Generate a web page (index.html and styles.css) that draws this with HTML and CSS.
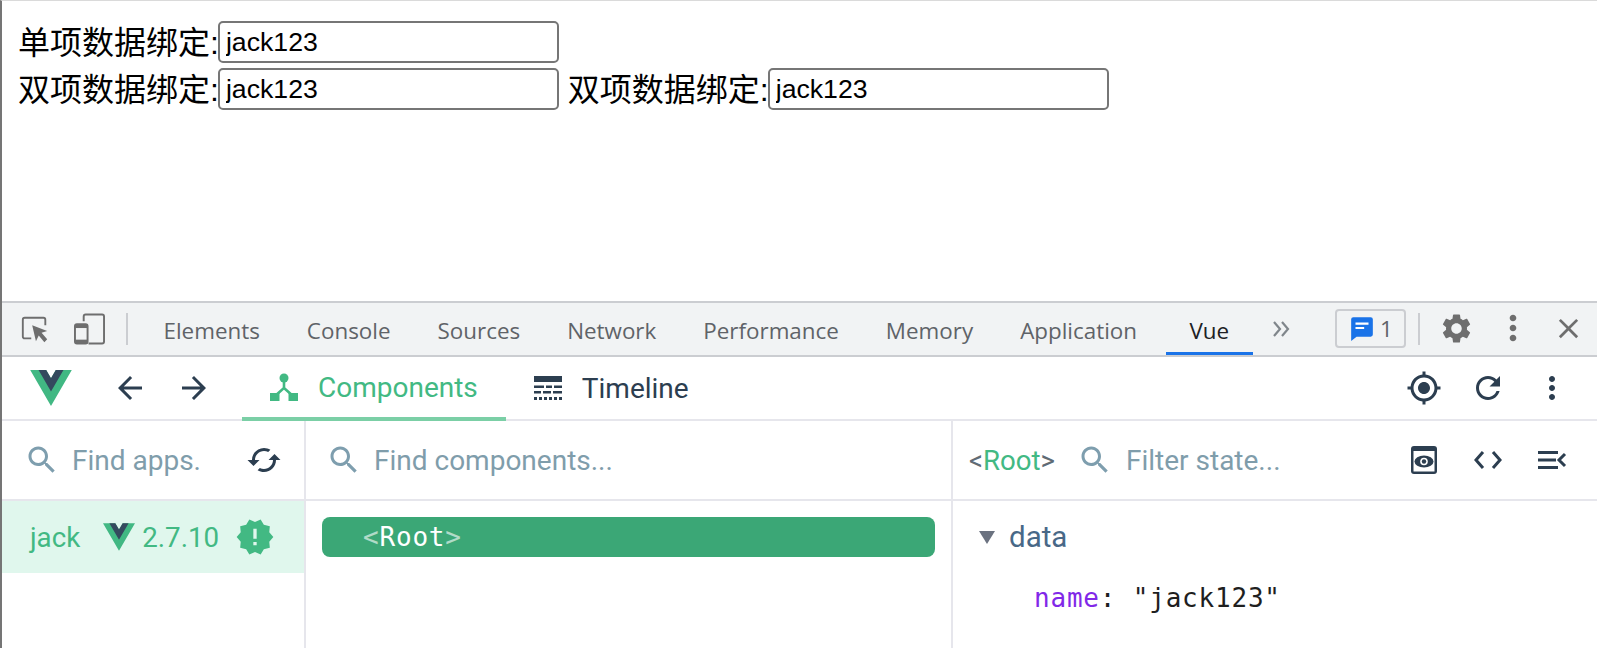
FILE: index.html
```html
<!DOCTYPE html>
<html lang="en">
<head>
    <meta charset="UTF-8">
    <title>Vue devtools</title>
    <link rel="stylesheet" href="styles.css">
</head>
<body>

<div class="window">
    <div class="page">
        <div class="row">单项数据绑定:<input class="field" type="text" value="jack123"></div>
        <div class="row">双项数据绑定:<input class="field" type="text" value="jack123"> 双项数据绑定:<input class="field" type="text" value="jack123"></div>
    </div>

    <div class="tabbar">
        <div class="tool-icons">
            <svg class="inspect" viewBox="0 0 32 32"><path d="M12 26H5a2 2 0 0 1-2-2V6a2 2 0 0 1 2-2h20a2 2 0 0 1 2 2v6" fill="none" stroke="#6e6e6e" stroke-width="2"/><path d="M13 12l16 6-6 2 6 7-3 3-6-7-3 6z" fill="#6e6e6e"/></svg>
            <svg class="device" viewBox="0 0 32 32"><path d="M10 8V3a2 2 0 0 1 2-2h17a2 2 0 0 1 2 2v26a2 2 0 0 1-2 2H15" fill="none" stroke="#6e6e6e" stroke-width="2"/><rect x="1" y="11" width="13" height="20" rx="2" fill="none" stroke="#6e6e6e" stroke-width="2"/><rect x="1" y="11" width="13" height="4" fill="#6e6e6e"/><rect x="1" y="27" width="13" height="4" fill="#6e6e6e"/></svg>
        </div>
        <span class="sep"></span>
        <div class="tabs">
            <span class="tab">Elements</span>
            <span class="tab">Console</span>
            <span class="tab">Sources</span>
            <span class="tab">Network</span>
            <span class="tab">Performance</span>
            <span class="tab">Memory</span>
            <span class="tab">Application</span>
            <span class="tab active">Vue</span>
        </div>
        <svg class="more-tabs" viewBox="0 0 18 16"><path d="M2 1l6 7-6 7M10 1l6 7-6 7" fill="none" stroke="#80868b" stroke-width="2.200"/></svg>
        <div class="tabbar-right">
            <span class="issues">
                <svg viewBox="0 0 24 24"><path d="M4 2h16a2 2 0 0 1 2 2v14a2 2 0 0 1-2 2H7l-5 4V4a2 2 0 0 1 2-2z" fill="#1a73e8"/><path d="M6 7h12v2H6zM6 11h8v2H6z" fill="#fff"/></svg>
                1
            </span>
            <span class="sep"></span>
            <svg class="gear" viewBox="0 0 24 24"><path d="M19.14 12.94c.04-.3.06-.61.06-.94 0-.32-.02-.64-.07-.94l2.03-1.58c.18-.14.23-.41.12-.61l-1.92-3.32c-.12-.22-.37-.29-.59-.22l-2.39.96c-.5-.38-1.03-.7-1.62-.94l-.36-2.54c-.04-.24-.24-.41-.48-.41h-3.84c-.24 0-.43.17-.47.41l-.36 2.54c-.59.24-1.13.57-1.62.94l-2.39-.96c-.22-.08-.47 0-.59.22L2.74 8.87c-.12.21-.08.47.12.61l2.03 1.58c-.05.3-.09.63-.09.94s.02.64.07.94l-2.03 1.58c-.18.14-.23.41-.12.61l1.92 3.32c.12.22.37.29.59.22l2.39-.96c.5.38 1.03.7 1.62.94l.36 2.54c.05.24.24.41.48.41h3.84c.24 0 .44-.17.47-.41l.36-2.54c.59-.24 1.13-.56 1.62-.94l2.39.96c.22.08.47 0 .59-.22l1.92-3.32c.12-.22.07-.47-.12-.61l-2.01-1.58zM12 15.6c-1.98 0-3.6-1.62-3.6-3.6s1.62-3.6 3.6-3.6 3.6 1.62 3.6 3.6-1.62 3.6-3.6 3.6z"/></svg>
            <svg class="dots" viewBox="0 0 24 24"><path d="M12 8c1.1 0 2-.9 2-2s-.9-2-2-2-2 .9-2 2 .9 2 2 2zm0 2c-1.1 0-2 .9-2 2s.9 2 2 2 2-.9 2-2-.9-2-2-2zm0 6c-1.1 0-2 .9-2 2s.9 2 2 2 2-.9 2-2-.9-2-2-2z"/></svg>
            <svg class="close" viewBox="0 0 24 24"><path d="M19 6.41L17.59 5 12 10.59 6.41 5 5 6.41 10.59 12 5 17.59 6.41 19 12 13.41 17.59 19 19 17.59 13.41 12z"/></svg>
        </div>
    </div>

    <div class="vuebar">
        <svg class="logo" viewBox="0 0 261.76 226.69"><path d="M161.096.001l-30.225 52.351L100.647.001H-.005l130.877 226.688L261.749.001z" fill="#41b883"/><path d="M161.096.001l-30.225 52.351L100.647.001H52.346l78.526 136.01L209.398.001z" fill="#34495e"/></svg>
        <svg class="ico nav-back" viewBox="0 0 24 24"><path d="M20 11H7.83l5.59-5.59L12 4l-8 8 8 8 1.41-1.41L7.83 13H20v-2z"/></svg>
        <svg class="ico nav-fwd" viewBox="0 0 24 24"><path d="M12 4l-1.41 1.41L16.17 11H4v2h12.17l-5.58 5.59L12 20l8-8z"/></svg>
        <div class="vue-tab on">
            <svg viewBox="0 0 28 28"><circle cx="14" cy="5" r="4.500"/><path d="M14 8v7L5 23M14 15l9 8" fill="none" stroke="#42b983" stroke-width="2.600"/><rect x="0" y="20" width="9.500" height="8"/><rect x="18.500" y="20" width="9.500" height="8"/></svg>
            Components
        </div>
        <div class="vue-tab">
            <svg viewBox="0 0 28 24"><path d="M0 0h28v6H0zM0 9.500h10V12H0zM12 9.500h6V12h-6zM20 9.500h8V12h-8zM0 15h7v2.500H0zM9 15h8v2.500H9zM19 15h9v2.500h-9zM0 21h3v3H0zM5 21h3v3H5zM10 21h3v3h-3zM15 21h3v3h-3zM20 21h3v3h-3zM25 21h3v3h-3z"/></svg>
            Timeline
        </div>
        <div class="vue-actions">
            <svg class="ico" viewBox="0 0 24 24"><path d="M12 8c-2.210 0-4 1.790-4 4s1.790 4 4 4 4-1.790 4-4-1.790-4-4-4zm8.940 3c-.46-4.170-3.770-7.480-7.940-7.940V1h-2v2.060C6.830 3.520 3.520 6.830 3.060 11H1v2h2.060c.46 4.170 3.770 7.480 7.940 7.940V23h2v-2.060c4.170-.46 7.480-3.770 7.940-7.940H23v-2h-2.060zM12 19c-3.870 0-7-3.130-7-7s3.130-7 7-7 7 3.130 7 7-3.130 7-7 7z"/></svg>
            <svg class="ico" viewBox="0 0 24 24"><path d="M17.65 6.35C16.2 4.9 14.21 4 12 4c-4.42 0-7.99 3.58-7.99 8s3.570 8 7.990 8c3.730 0 6.840-2.550 7.730-6h-2.080c-.82 2.330-3.040 4-5.650 4-3.310 0-6-2.690-6-6s2.690-6 6-6c1.660 0 3.140.69 4.220 1.780L13 11h7V4l-2.350 2.350z"/></svg>
            <svg class="ico" viewBox="0 0 24 24"><path d="M12 8c1.1 0 2-.9 2-2s-.9-2-2-2-2 .9-2 2 .9 2 2 2zm0 2c-1.1 0-2 .9-2 2s.9 2 2 2 2-.9 2-2-.9-2-2-2zm0 6c-1.1 0-2 .9-2 2s.9 2 2 2 2-.9 2-2-.9-2-2-2z"/></svg>
        </div>
    </div>

    <div class="panes">
        <div class="pane apps">
            <div class="pane-head">
                <svg class="search" viewBox="0 0 24 24"><path d="M15.500 14h-.79l-.28-.27C15.410 12.590 16 11.110 16 9.500 16 5.910 13.090 3 9.500 3S3 5.910 3 9.500 5.910 16 9.500 16c1.610 0 3.090-.59 4.230-1.570l.27.28v.79l5 4.990L20.490 19l-4.990-5zm-6 0C7.010 14 5 11.990 5 9.500S7.010 5 9.500 5 14 7.010 14 9.500 11.990 14 9.500 14z"/></svg>
                <span class="placeholder">Find apps.</span>
                <svg class="sync" viewBox="0 0 24 24"><path d="M19 8l-4 4h3c0 3.310-2.690 6-6 6-1.010 0-1.970-.25-2.800-.7l-1.460 1.460C8.970 19.540 10.430 20 12 20c4.420 0 8-3.580 8-8h3l-4-4zM6 12c0-3.310 2.690-6 6-6 1.010 0 1.970.25 2.800.7l1.460-1.460C15.030 4.460 13.570 4 12 4c-4.420 0-8 3.580-8 8H1l4 4 4-4H6z"/></svg>
            </div>
            <div class="app-row">
                <span class="app-name">jack</span>
                <svg class="app-logo" viewBox="0 0 261.76 226.69"><path d="M161.096.001l-30.225 52.351L100.647.001H-.005l130.877 226.688L261.749.001z" fill="#41b883"/><path d="M161.096.001l-30.225 52.351L100.647.001H52.346l78.526 136.01L209.398.001z" fill="#34495e"/></svg>
                <span class="app-ver">2.7.10</span>
                <svg class="app-badge" viewBox="0 0 24 24"><path d="M23 12l-2.440-2.780.34-3.680-3.610-.82-1.890-3.180L12 3 8.600 1.540 6.710 4.720l-3.610.81.34 3.680L1 12l2.440 2.780-.34 3.690 3.610.82 1.890 3.180L12 21l3.400 1.460 1.890-3.180 3.610-.82-.34-3.680L23 12zm-10 5h-2v-2h2v2zm0-4h-2V7h2v6z"/></svg>
            </div>
        </div>

        <div class="pane tree">
            <div class="pane-head">
                <svg class="search" viewBox="0 0 24 24"><path d="M15.500 14h-.79l-.28-.27C15.410 12.590 16 11.110 16 9.500 16 5.910 13.090 3 9.500 3S3 5.910 3 9.500 5.910 16 9.500 16c1.610 0 3.090-.59 4.230-1.570l.27.28v.79l5 4.990L20.490 19l-4.990-5zm-6 0C7.010 14 5 11.990 5 9.500S7.010 5 9.500 5 14 7.010 14 9.500 11.990 14 9.500 14z"/></svg>
                <span class="placeholder">Find components...</span>
            </div>
            <div class="tree-body">
                <div class="tree-node"><span class="angle">&lt;</span>Root<span class="angle">&gt;</span></div>
            </div>
        </div>

        <div class="pane state">
            <div class="pane-head">
                <span class="root-tag"><span class="tag-angle">&lt;</span>Root<span class="tag-angle">&gt;</span></span>
                <svg class="search" viewBox="0 0 24 24"><path d="M15.500 14h-.79l-.28-.27C15.410 12.590 16 11.110 16 9.500 16 5.910 13.090 3 9.500 3S3 5.910 3 9.500 5.910 16 9.500 16c1.610 0 3.090-.59 4.230-1.570l.27.28v.79l5 4.990L20.490 19l-4.990-5zm-6 0C7.010 14 5 11.990 5 9.500S7.010 5 9.500 5 14 7.010 14 9.500 11.990 14 9.500 14z"/></svg>
                <span class="placeholder">Filter state...</span>
                <div class="state-actions">
                    <svg viewBox="0 0 32 32"><rect x="3" y="2" width="26" height="28" rx="3"/><rect x="5.500" y="7" width="21" height="20.500" fill="#fff"/><ellipse cx="16" cy="17.500" rx="9.500" ry="6"/><circle cx="16" cy="17.500" r="3.800" fill="#fff"/><circle cx="16" cy="17.500" r="2.200"/></svg>
                    <svg viewBox="0 0 32 32"><path d="M11 8l-7 8 7 8M21 8l7 8-7 8" fill="none" stroke="#2c3e50" stroke-width="3"/></svg>
                    <svg viewBox="0 0 32 32"><path d="M2 7h20v3H2zM2 14.500h18v3H2zM2 22h20v3H2z"/><path d="M29 10l-6 6 6 6" fill="none" stroke="#2c3e50" stroke-width="3"/></svg>
                </div>
            </div>
            <div class="state-body">
                <div class="section"><span class="caret"></span>data</div>
                <div class="prop"><span class="key">name</span>: "jack123"</div>
            </div>
        </div>
    </div>
</div>

</body>
</html>
```

FILE: styles.css
```css
html, body {
    margin: 0;
    height: 100%;
    overflow: hidden;
    background: white;
}
.window {
    height: 648px;
    box-sizing: border-box;
    border-top: 1px solid #dadada;
    border-left: 2px solid #757575;
    display: flex;
    flex-direction: column;
    font-family: Roboto, sans-serif;
}

/* page above the devtools, zoomed 200% */
.page {
    height: 281px;
    padding: 19px 16px 0;
    font-family: "Liberation Sans", "Noto Sans CJK SC", sans-serif;
    font-size: 32px;
    color: black;
    line-height: 47px;
}
.row {
    height: 47px;
    white-space: pre-wrap;
}
.field {
    box-sizing: border-box;
    width: 341px;
    height: 42px;
    border: 2px solid #767676;
    border-radius: 5px;
    padding: 2px 6px;
    margin: 1px 0 0 -1px;
    font-family: "Liberation Sans", sans-serif;
    font-size: 26.67px;
    color: black;
    background: white;
    vertical-align: top;
}

/* chrome tab strip */
.tabbar {
    height: 56px;
    flex: none;
    box-sizing: border-box;
    background: #f1f3f4;
    border-top: 2px solid #cbcdd1;
    border-bottom: 2px solid #cbcdd1;
    display: flex;
    align-items: center;
    font-family: "Open Sans", sans-serif;
    font-size: 22.4px;
    color: #5f6368;
}
.tool-icons {
    display: flex;
    align-items: center;
    gap: 24px;
    padding-left: 18px;
    width: 124px;
    box-sizing: border-box;
}
.inspect {
    width: 30px;
    height: 30px;
}
.device {
    width: 31px;
    height: 32px;
}
.sep {
    width: 2px;
    height: 32px;
    background: #cbcdd1;
    flex: none;
}
.tabs {
    display: flex;
    height: 100%;
    padding-left: 12px;
}
.tab {
    padding: 3px 23.5px 0;
    display: flex;
    align-items: center;
    white-space: nowrap;
    box-sizing: border-box;
}
.tab.active {
    color: #202124;
    box-shadow: inset 0 -3px 0 #1a73e8;
    padding: 3px 24px 0;
    margin-left: 5px;
}
.more-tabs {
    width: 18px;
    height: 16px;
    margin-left: 19px;
    margin-top: -1px;
}
.tabbar-right {
    margin-left: auto;
    display: flex;
    align-items: center;
    height: 100%;
}
.issues {
    box-sizing: border-box;
    width: 71px;
    height: 39px;
    border: 2px solid #cbcdd1;
    border-radius: 4px;
    display: flex;
    align-items: center;
    gap: 5px;
    padding-left: 12px;
    margin-right: 12px;
    margin-top: -2px;
}
.issues svg {
    width: 26px;
    height: 26px;
}
.gear, .dots, .close {
    fill: #6e6e6e;
    margin-top: -2px;
}
.gear {
    width: 35px;
    height: 35px;
    margin-left: 19px;
}
.dots {
    width: 40px;
    height: 40px;
    margin-left: 19px;
}
.close {
    width: 33px;
    height: 33px;
    margin-left: 19px;
    margin-right: 12px;
}

/* vue devtools toolbar */
.ico {
    width: 36px;
    height: 36px;
    fill: #2c3e50;
}
.vuebar {
    height: 64px;
    flex: none;
    box-sizing: border-box;
    border-bottom: 2px solid #e6e6ec;
    display: flex;
    align-items: center;
}
.logo {
    width: 42px;
    height: 36px;
    margin-left: 28px;
}
.nav-back {
    margin-left: 40px;
}
.nav-fwd {
    margin-left: 28px;
}
.vue-tab {
    height: 100%;
    display: flex;
    align-items: center;
    gap: 20px;
    padding: 0 28px;
    font-size: 28px;
    color: #2c3e50;
    box-sizing: border-box;
}
.vue-tab svg {
    width: 28px;
    height: 28px;
    fill: #2c3e50;
}
.vue-tab.on {
    margin-left: 30px;
    color: #42b983;
    border-bottom: 4px solid #7bcfa6;
    margin-bottom: -2px;
    height: calc(100% + 2px);
}
.vue-tab.on svg {
    fill: #42b983;
}
.vue-actions {
    margin-left: auto;
    display: flex;
    align-items: center;
    gap: 28px;
    padding-right: 27px;
}

/* the three panes */
.panes {
    flex: 1;
    display: grid;
    grid-template-columns: 304px 647px 1fr;
    min-height: 0;
}
.pane {
    border-right: 2px solid #e6e6ec;
    min-width: 0;
}
.pane.state {
    border-right: none;
}
.pane-head {
    height: 80px;
    box-sizing: border-box;
    border-bottom: 2px solid #e6e6ec;
    display: flex;
    align-items: center;
    padding-left: 22px;
    font-size: 28px;
}
.tree .pane-head {
    padding-left: 20px;
}
.search {
    width: 36px;
    height: 36px;
    fill: #7e9eae;
    flex: none;
}
.placeholder {
    color: #7f9dab;
    margin-left: 12px;
    white-space: nowrap;
}
.state .placeholder {
    margin-left: 13px;
}
.sync {
    width: 36px;
    height: 36px;
    fill: #2c3e50;
    margin-left: auto;
    margin-right: 22px;
}
.app-row {
    height: 72px;
    background: #e0f7ed;
    display: flex;
    align-items: center;
    padding-left: 28px;
    color: #42b983;
    font-size: 27.7px;
}
.app-logo {
    width: 32px;
    height: 28px;
    margin-left: 23px;
}
.app-ver {
    margin-left: 7px;
}
.app-badge {
    width: 40px;
    height: 40px;
    fill: #42b983;
    margin-left: 16px;
}
.tree-body {
    padding: 16px 16px;
}
.tree-node {
    height: 40px;
    background: #3ba776;
    border-radius: 8px;
    color: white;
    font-family: "DejaVu Sans Mono", monospace;
    font-size: 26px;
    line-height: 40px;
    padding-left: 41px;
    letter-spacing: 0.8px;
}
.angle {
    opacity: 0.6;
}
.state .pane-head {
    padding-left: 16px;
}
.root-tag {
    font-size: 27.6px;
    color: #42b983;
    margin-right: 22px;
}
.tag-angle {
    color: #5f6b75;
}
.state-actions {
    margin-left: auto;
    display: flex;
    align-items: center;
    gap: 32px;
    padding-right: 29px;
}
.state-actions svg {
    width: 32px;
    height: 32px;
    fill: #2c3e50;
}
.state-body {
    padding: 18px 26px;
}
.section {
    display: flex;
    align-items: center;
    font-size: 29.5px;
    color: #486887;
    height: 36px;
}
.caret {
    width: 0;
    height: 0;
    border-left: 8px solid transparent;
    border-right: 8px solid transparent;
    border-top: 13px solid #6b7280;
    margin-right: 14px;
}
.prop {
    margin-top: 28px;
    padding-left: 55px;
    font-family: "DejaVu Sans Mono", monospace;
    font-size: 26px;
    letter-spacing: 0.8px;
    color: #1f1f1f;
    white-space: nowrap;
}
.key {
    color: #8128e8;
}
```
